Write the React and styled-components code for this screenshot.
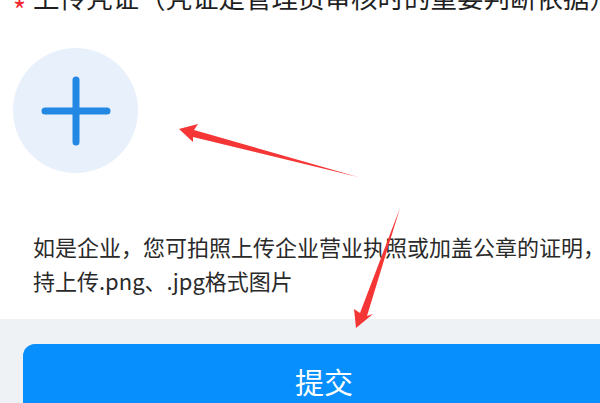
import React from 'react'
import styled, { createGlobalStyle } from 'styled-components';

const Global = createGlobalStyle`
  html, body {
    margin: 0;
    padding: 0;
    background: #fff;
    overflow: hidden;
  }
  body {
    font-family: "Noto Sans CJK SC", "Noto Sans", sans-serif;
  }
`;

const Page = styled.div`
  position: relative;
  width: 648px;
  height: 403px;
  overflow: hidden;
`;

const Form = styled.section`
  background: #fff;
  height: 319px;
  display: flex;
  flex-direction: column;
`;

const Label = styled.div`
  display: flex;
  align-items: flex-start;
  flex-shrink: 0;
  height: 26px;
  margin-top: -16px;
  padding-left: 13px;
  font-size: 26.5px;
  line-height: 26px;
  color: #1f1f1f;
  white-space: nowrap;
  .star {
    color: #f2262f;
    font-size: 28px;
    line-height: 26px;
    margin-top: 12px;
    margin-right: 7px;
  }
`;

const Uploader = styled.button`
  flex-shrink: 0;
  width: 125px;
  height: 125px;
  margin: 38px 0 0 13px;
  border: none;
  padding: 0;
  border-radius: 50%;
  background: #e8f0fc;
  display: flex;
  align-items: center;
  justify-content: center;
  cursor: pointer;
`;

const Hint = styled.p`
  margin: 56px 0 0 33px;
  font-size: 22px;
  line-height: 34px;
  color: #2a2a2a;
  white-space: nowrap;
`;

const Footer = styled.div`
  background: #eef2f5;
  padding: 25px 23px 0;
  height: 100%;
`;

const SubmitButton = styled.button`
  width: 100%;
  height: 74px;
  border: none;
  border-radius: 12px;
  background: #078ffd;
  color: #fff;
  font-family: "Noto Sans CJK SC", sans-serif;
  font-size: 29px;
  cursor: pointer;
`;

const Annotations = styled.svg`
  position: absolute;
  left: 0;
  top: 0;
  pointer-events: none;
`;

const Plus = () => (
  <svg width="70" height="70" viewBox="0 0 70 70">
    <g stroke="#2388e4" strokeWidth="7" strokeLinecap="round">
      <line x1="4" y1="35" x2="66" y2="35" />
      <line x1="35" y1="4" x2="35" y2="66" />
    </g>
  </svg>
);

export default function App() {
  return (
    <Page>
      <Global />
      <Form>
        <Label>
          <span className="star">*</span>
          <span>上传凭证（凭证是管理员审核时的重要判断依据）</span>
        </Label>
        <Uploader aria-label="上传">
          <Plus />
        </Uploader>
        <Hint>
          如是企业，您可拍照上传企业营业执照或加盖公章的证明，支<br />
          持上传.png、.jpg格式图片
        </Hint>
      </Form>
      <Footer>
        <SubmitButton>提交</SubmitButton>
      </Footer>
      <Annotations width="600" height="403" viewBox="0 0 600 403">
        <g fill="#f53636">
          <polygon points="179,129 198,124 194,130 358,177 193,137 193,142" />
          <polygon points="356,328 354,309 360,313 400,208 367,316 373,314" />
        </g>
      </Annotations>
    </Page>
  );
}
